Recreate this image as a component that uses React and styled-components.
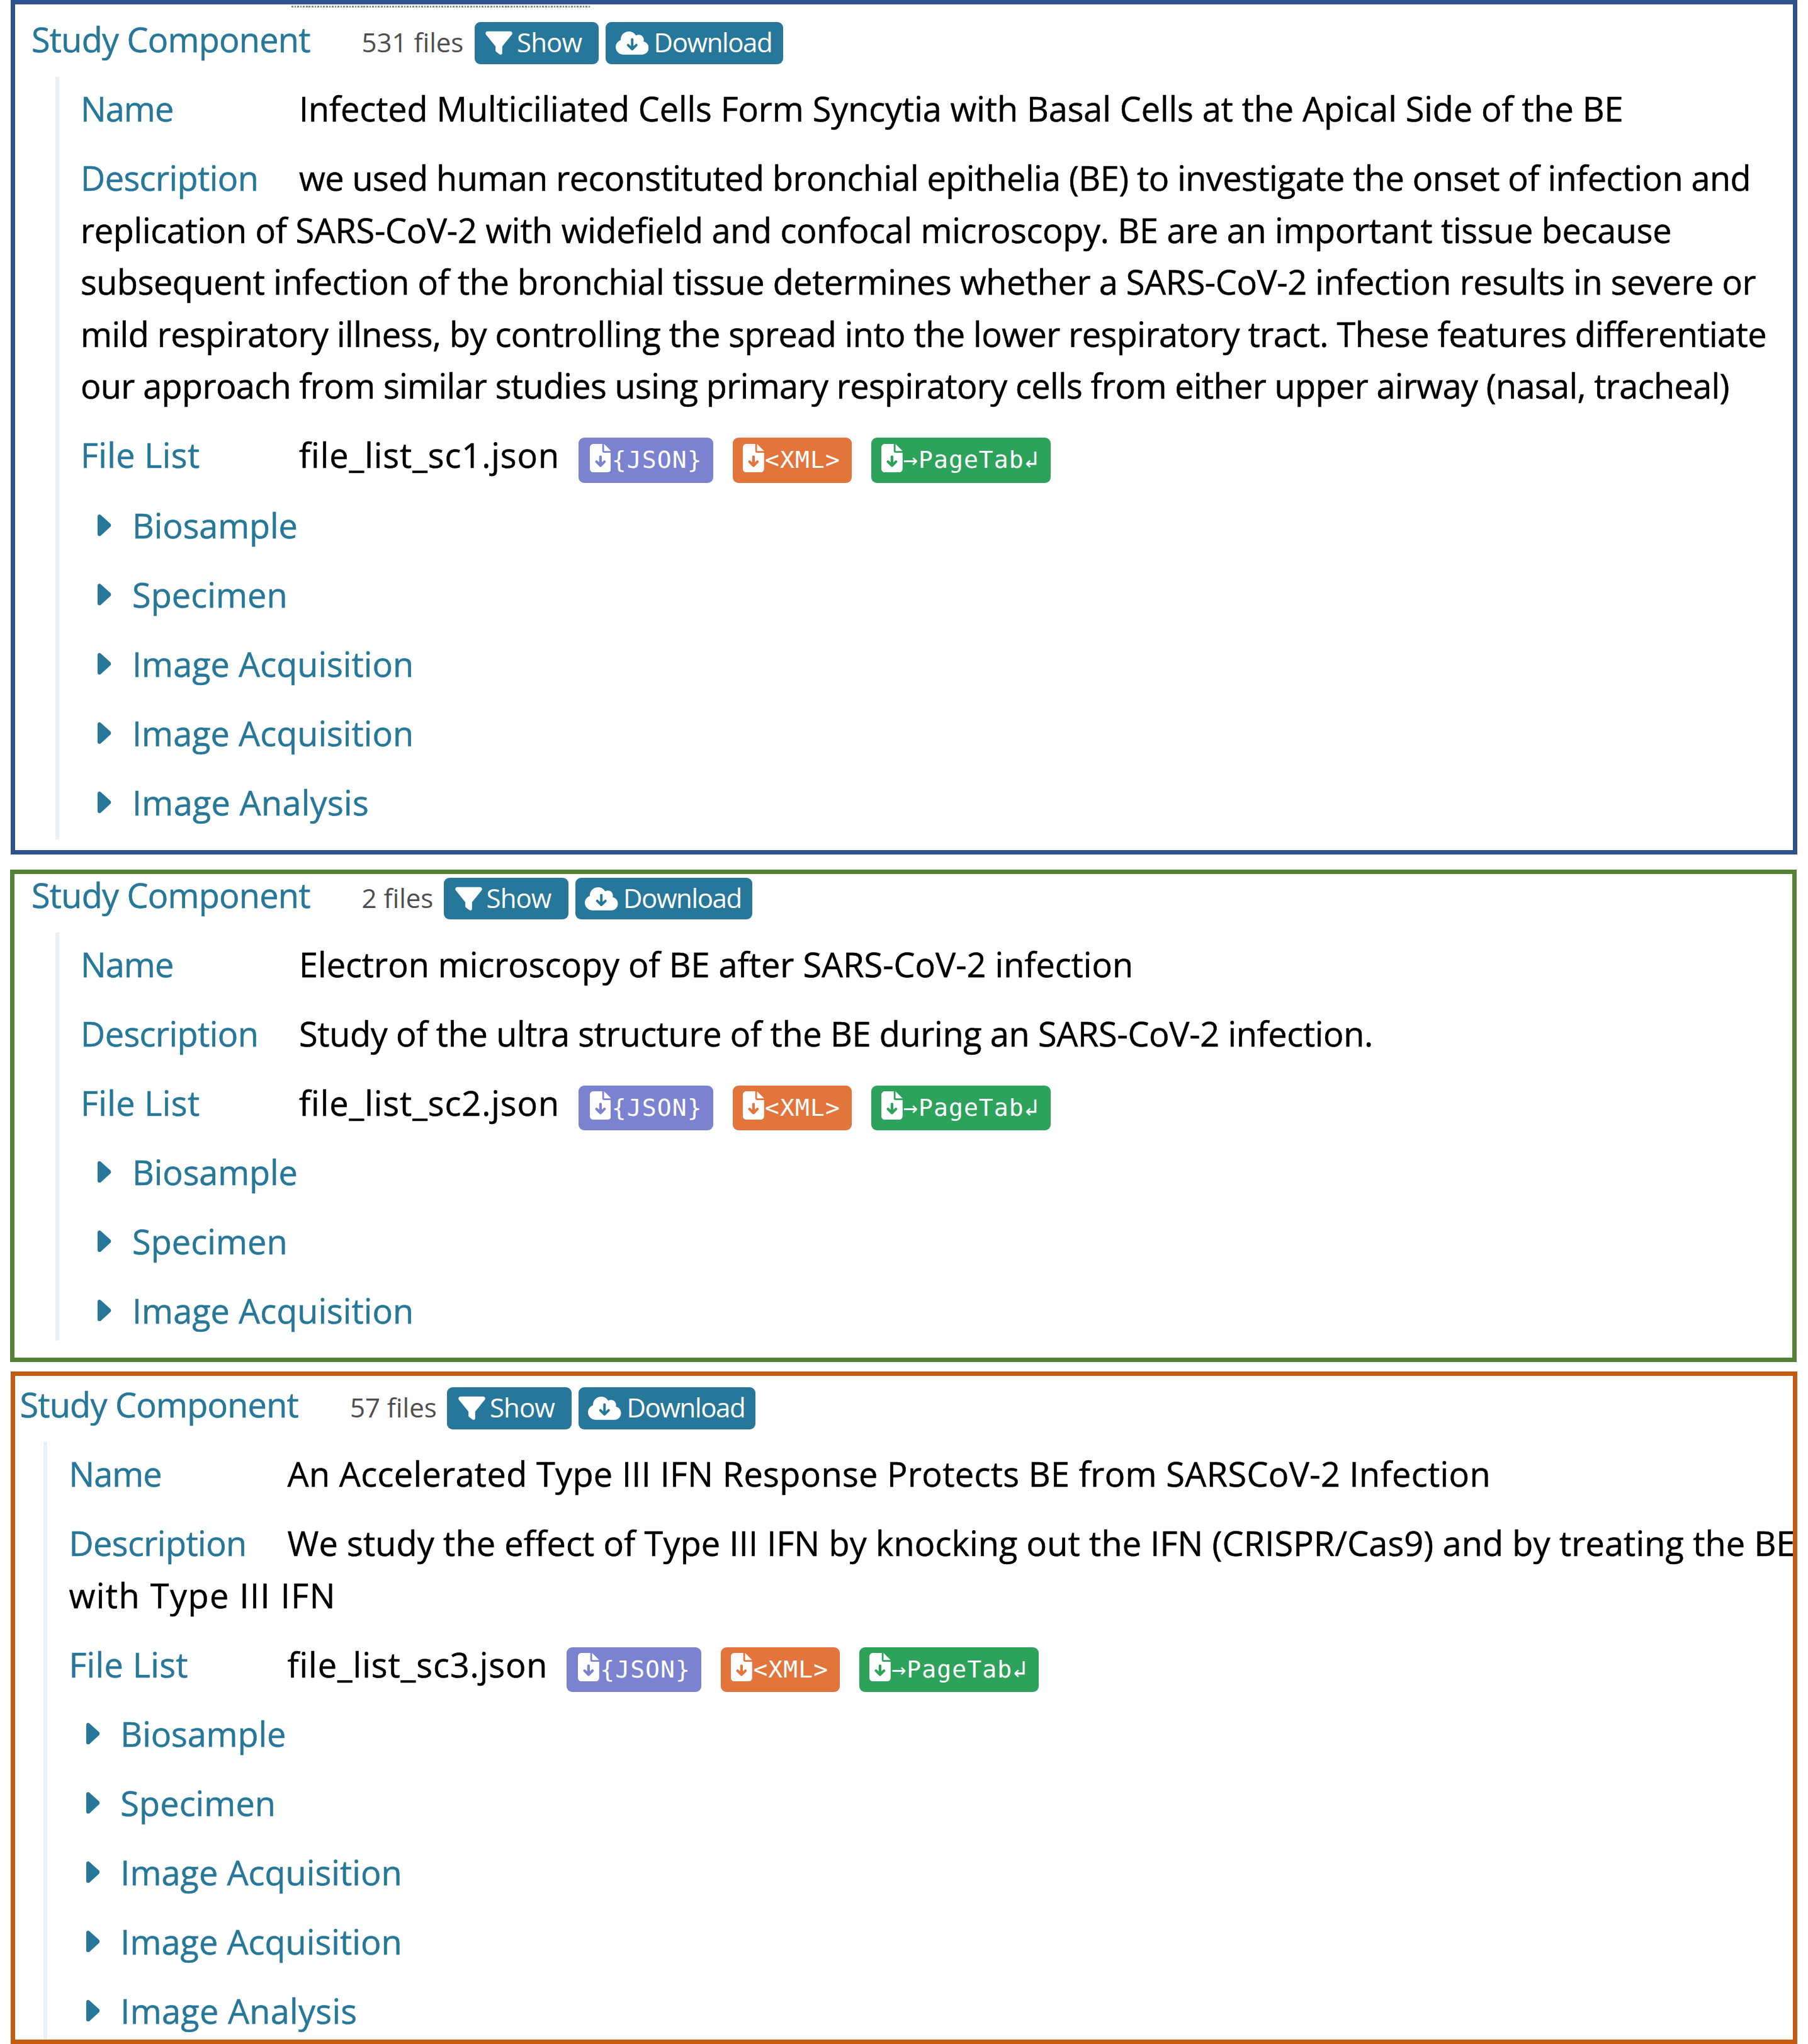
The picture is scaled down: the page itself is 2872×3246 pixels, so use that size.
import React from "react";
import styled, { createGlobalStyle } from "styled-components";
import { FaFilter, FaCloudArrowDown, FaFileArrowDown } from "react-icons/fa6";

const teal = "#267799";

const GlobalStyle = createGlobalStyle`
  body {
    margin: 0;
    background: #fff;
    font-family: "Open Sans", "Noto Sans", sans-serif;
    color: #000;
  }
`;

const Page = styled.main`
  width: 2872px;
  height: 3246px;
  overflow: hidden;
  display: flex;
  flex-direction: column;
  align-items: flex-start;
`;

const Panel = styled.section`
  box-sizing: border-box;
  flex: none;
  width: 2838px;
  height: ${(p) => p.$height}px;
  margin: ${(p) => p.$gapAbove}px 0 0 ${(p) => p.$left}px;
  padding-top: ${(p) => p.$padTop}px;
  border: 7px solid ${(p) => p.$color};
  overflow: hidden;
`;

const DottedRule = styled.div`
  width: 476px;
  height: 3px;
  margin: 0 0 20.3px 438.5px;
  background: repeating-linear-gradient(
    to right,
    #8c8c8c 0 2.6px,
    #f0f0f0 2.6px 4.58px
  );
`;

const Header = styled.header`
  display: flex;
  align-items: baseline;
  padding-left: ${(p) => p.$inset}px;
  white-space: nowrap;
`;

const Title = styled.h2`
  width: 524.5px;
  margin: 0;
  font-size: 54px;
  font-weight: 400;
  line-height: 60px;
  letter-spacing: -0.75px;
  color: ${teal};
  -webkit-text-stroke: 0.5px currentColor;
`;

const FileCount = styled.span`
  width: ${(p) => p.$width}px;
  font-size: 42px;
  line-height: 60px;
  color: #4e4e4e;
`;

const Button = styled.button`
  box-sizing: border-box;
  display: flex;
  align-items: baseline;
  width: ${(p) => p.$width}px;
  height: 66.7px;
  margin: 0 ${(p) => p.$after || 0}px 0 0;
  padding: 0 0 2.3px ${(p) => p.$pad}px;
  border: 0;
  border-radius: 9px;
  background: ${teal};
  color: #fff;
  font-family: inherit;
  font-size: 42px;
  line-height: 64.4px;
  letter-spacing: ${(p) => p.$spacing}px;

  svg {
    flex: none;
    align-self: center;
    width: ${(p) => p.$icon}px;
    height: 42.5px;
    margin: 2px ${(p) => p.$iconGap}px 0 0;
  }
`;

const Body = styled.div`
  margin: 20.5px 0 0 ${(p) => p.$inset + 38}px;
  padding: 8.9px 0 ${(p) => p.$padBottom}px 34px;
  border-left: 6px solid #e6f1f8;
  font-size: 54px;
  line-height: 82.5px;
  white-space: nowrap;
  -webkit-text-stroke: 0.5px currentColor;
`;

const Field = styled.div`
  display: flex;
  flex-wrap: wrap;
  width: 2860px;
  margin-bottom: 27.5px;
`;

const Label = styled.span`
  flex: none;
  width: 347px;
  color: ${teal};
  letter-spacing: ${(p) => p.$spacing}px;
`;

const Line = styled.span`
  flex: ${(p) => (p.$full ? "0 0 100%" : "none")};
  letter-spacing: ${(p) => p.$spacing}px;
`;

const FileField = styled.div`
  display: flex;
  align-items: flex-start;
  height: 82.5px;
  margin-bottom: 27.5px;
`;

const FileName = styled.span`
  width: 444px;
  letter-spacing: 0.95px;
`;

const Badge = styled.a`
  box-sizing: border-box;
  display: flex;
  width: ${(p) => p.$width}px;
  height: 71.3px;
  margin: 13.9px 31px 0 0;
  padding-left: ${(p) => p.$pad}px;
  border-radius: 9px;
  background: ${(p) => p.$color};
  color: #fff;
  font-family: "DejaVu Sans Mono", monospace;
  font-size: 38px;
  line-height: 70.3px;
  letter-spacing: 1.1px;
  -webkit-text-stroke: 0;

  svg {
    flex: none;
    width: 33.8px;
    height: 45px;
    margin: 9.5px 1.3px 0 0;
  }
`;

const Tree = styled.ul`
  display: flex;
  flex-direction: column;
  gap: 27.5px;
  margin: 0;
  padding: ${(p) => p.$offset}px 0 0 27.4px;
  list-style: none;
`;

const Node = styled.li`
  display: flex;
  align-items: center;
  gap: 33.2px;
  color: ${teal};
  letter-spacing: ${(p) => p.$spacing}px;

  svg {
    flex: none;
    width: 21.4px;
    height: 34.4px;
  }
`;

const Caret = () => (
  <svg viewBox="0 0 21.4 34.4" fill="currentColor">
    <path d="M0 3.2C0 .4 3-.9 5.2.9L20.2 14.6a3.5 3.5 0 0 1 0 5.2L5.2 33.5C3 35.3 0 34 0 31.2Z" />
  </svg>
);

const nodeSpacing = {
  Biosample: -0.1,
  Specimen: 0.1,
  "Image Acquisition": 0.05,
  "Image Analysis": 0.3,
};

const studies = [
  {
    color: "#2f528f",
    height: 1357,
    gapAbove: 0,
    left: 17,
    padTop: 2,
    inset: 26,
    padBottom: 17,
    rule: true,
    count: "531 files",
    countWidth: 179.1,
    name: ["Infected Multiciliated Cells Form Syncytia with Basal Cells at the Apical Side of the BE", -0.085],
    description: [
      ["we used human reconstituted bronchial epithelia (BE) to investigate the onset of infection and", -0.547],
      ["replication of SARS-CoV-2 with widefield and confocal microscopy. BE are an important tissue because", -0.29],
      ["subsequent infection of the bronchial tissue determines whether a SARS-CoV-2 infection results in severe or", -0.42],
      ["mild respiratory illness, by controlling the spread into the lower respiratory tract. These features differentiate", -0.536],
      ["our approach from similar studies using primary respiratory cells from either upper airway (nasal, tracheal)", -0.62],
    ],
    file: "file_list_sc1.json",
    treeOffset: 2,
    nodes: ["Biosample", "Specimen", "Image Acquisition", "Image Acquisition", "Image Analysis"],
  },
  {
    color: "#548235",
    height: 782,
    gapAbove: 24,
    left: 16,
    padTop: 2.7,
    inset: 27,
    padBottom: 7,
    count: "2 files",
    countWidth: 130.5,
    name: ["Electron microscopy of BE after SARS-CoV-2 infection", 0],
    description: [["Study of the ultra structure of the BE during an SARS-CoV-2 infection.", -0.33]],
    file: "file_list_sc2.json",
    treeOffset: 0,
    nodes: ["Biosample", "Specimen", "Image Acquisition"],
  },
  {
    color: "#c55a11",
    height: 1068,
    gapAbove: 15,
    left: 17,
    padTop: 15.3,
    inset: 7.4,
    padBottom: 40,
    count: "57 files",
    countWidth: 154.6,
    name: ["An Accelerated Type III IFN Response Protects BE from SARSCoV-2 Infection", 0.36],
    description: [
      ["We study the effect of Type III IFN by knocking out the IFN (CRISPR/Cas9) and by treating the BE", 0.14],
      ["with Type III IFN", 1.5],
    ],
    file: "file_list_sc3.json",
    treeOffset: 0,
    nodes: ["Biosample", "Specimen", "Image Acquisition", "Image Acquisition", "Image Analysis"],
  },
];

function Study({ study: s }) {
  return (
    <Panel $color={s.color} $height={s.height} $gapAbove={s.gapAbove} $left={s.left} $padTop={s.padTop}>
      {s.rule && <DottedRule />}
      <Header $inset={s.inset}>
        <Title>Study Component</Title>
        <FileCount $width={s.countWidth}>{s.count}</FileCount>
        <Button $width={197.5} $pad={17.5} $icon={43} $iconGap={7} $spacing={-0.9} $after={11}>
          <FaFilter />
          Show
        </Button>
        <Button $width={281.5} $pad={15.5} $icon={52.5} $iconGap={8.5} $spacing={-1.4}>
          <FaCloudArrowDown />
          Download
        </Button>
      </Header>
      <Body $inset={s.inset} $padBottom={s.padBottom}>
        <Field>
          <Label $spacing={-0.9}>Name</Label>
          <Line $spacing={s.name[1]}>{s.name[0]}</Line>
        </Field>
        <Field>
          <Label $spacing={-0.55}>Description</Label>
          {s.description.map(([text, spacing], i) => (
            <Line key={text} $full={i > 0} $spacing={spacing}>
              {text}
            </Line>
          ))}
        </Field>
        <FileField>
          <Label $spacing={0.36}>File List</Label>
          <FileName>{s.file}</FileName>
          <Badge $color="#7b82cf" $width={213.5} $pad={17.7}>
            <FaFileArrowDown />
            {"{JSON}"}
          </Badge>
          <Badge $color="#e2753c" $width={189} $pad={16.4}>
            <FaFileArrowDown />
            {"<XML>"}
          </Badge>
          <Badge $color="#2ca25b" $width={285.5} $pad={16.4}>
            <FaFileArrowDown />
            →PageTab↲
          </Badge>
        </FileField>
        <Tree $offset={s.treeOffset}>
          {s.nodes.map((n, i) => (
            <Node key={i} $spacing={nodeSpacing[n]}>
              <Caret />
              {n}
            </Node>
          ))}
        </Tree>
      </Body>
    </Panel>
  );
}

export default function App() {
  return (
    <>
      <GlobalStyle />
      <Page>
        {studies.map((s) => (
          <Study key={s.file} study={s} />
        ))}
      </Page>
    </>
  );
}
